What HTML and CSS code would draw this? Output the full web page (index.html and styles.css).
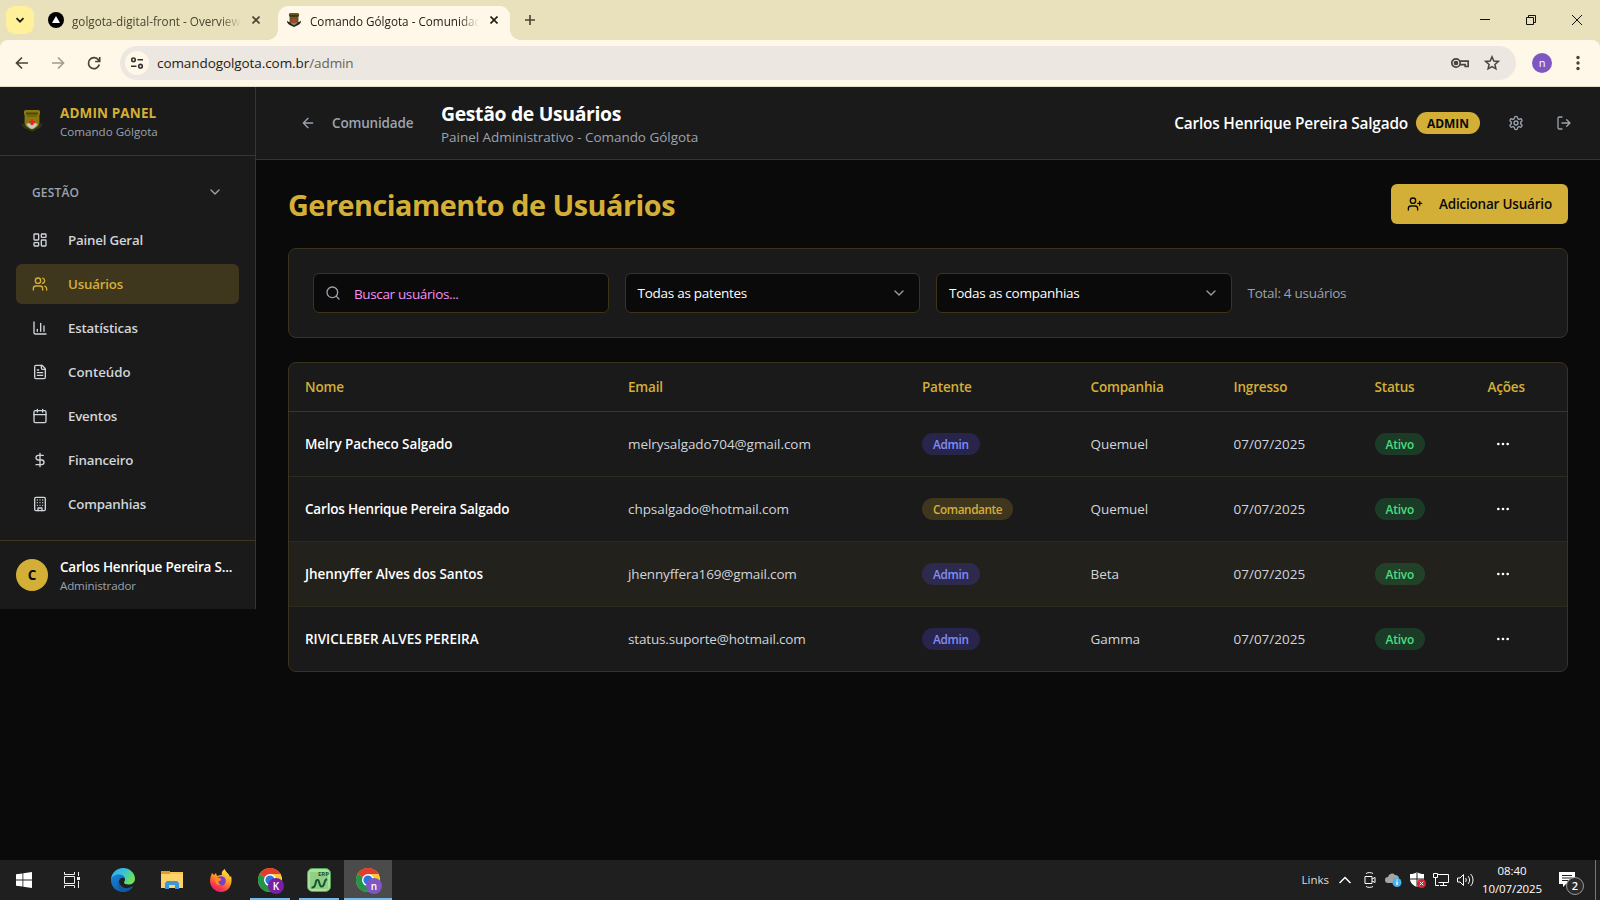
FILE: index.html
```html
<!DOCTYPE html>
<html lang="pt-BR">
<head>
<meta charset="utf-8">
<title>Comando Gólgota - Comunidade</title>
<link rel="stylesheet" href="styles.css">
</head>
<body>
<svg class="defs" width="0" height="0">
  <defs>
    <symbol id="crest" viewBox="0 0 22 22">
      <path d="M.5 12.500c0 5 4 6 6 7l4.500 2.200 4.500-2.200c2-1 6-2 6-7l-3 3H3.500z" fill="#333719"/>
      <path d="M3 1l1.500-1h13L19 1v3l-.6 1v8.500c0 2-3.400 4.500-7.400 6C7 18 3.600 15.500 3.600 13.500V5L3 4z" fill="#8a780e"/>
      <path d="M5 2.500h12v2H5z" fill="#4d450d"/><path d="M6 5.500h10v1H6z" fill="#5a500f"/>
      <path d="M5.500 14l2.500-1 3 2.500 3-2.500 2.500 1c-.8 2.500-3 4-5.500 5-2.500-1-4.700-2.500-5.500-5z" fill="#c9c9c2"/>
      <path d="M10 9h2v2h2v2h-2v2h-2v-2H8v-2h2z" fill="#e8261c"/>
    </symbol>
    <symbol id="crest-dark" viewBox="0 0 22 22">
      <path d="M0 12c0 5 4 6.500 6 7.500l5 2.500 5-2.500c2-1 6-2.500 6-7.500l-3 2H3z" fill="#24231c"/>
      <path d="M3 1l2-1h12l2 1v3l-1 1v8c0 3-3 5-7 6.500C7 18 4 16 4 13V5L3 4z" fill="#6b5626"/>
      <path d="M4 3h14v3H4z" fill="#3d321b"/>
      <path d="M6 14l5 2 5-2c-.8 2.500-3 4-5 5-2-1-4.200-2.500-5-5z" fill="#8d8775"/>
      <path d="M10 9h2v2h2v2h-2v2h-2v-2H8v-2h2z" fill="#d8392b"/>
    </symbol>
    <symbol id="chrome" viewBox="0 0 24 24">
      <circle cx="12" cy="12" r="12" fill="#fbc934"/>
      <path d="M12 12L1.600 6A12 12 0 0 1 22.400 6z" fill="#e33b2e"/>
      <path d="M1.600 6A12 12 0 0 0 12 24l5.200-9L12 12z" fill="#249447"/>
      <path d="M12 6h10.400A12 12 0 0 1 12 24l5.200-9z" fill="#fbc934"/>
      <circle cx="12" cy="12" r="6" fill="#fff"/><circle cx="12" cy="12" r="4.600" fill="#2f73e0"/>
    </symbol>
    <symbol id="chevron" viewBox="0 0 24 24"><path d="m6 9 6 6 6-6"/></symbol>
    <symbol id="dots" viewBox="0 0 24 24"><circle cx="12" cy="12" r="1"/><circle cx="19" cy="12" r="1"/><circle cx="5" cy="12" r="1"/></symbol>
  </defs>
</svg>

<div class="tabstrip">
  <div class="tab-search"><svg width="10" height="10" viewBox="0 0 10 10"><path d="M1.500 3.200 5 6.700l3.500-3.500"/></svg></div>
  <div class="tab">
    <svg class="favicon" width="16" height="16" viewBox="0 0 16 16"><circle cx="8" cy="8" r="8" fill="#000"/><path d="M8 4l4 7H4z" fill="#fff"/></svg>
    <span class="tab-title">golgota-digital-front - Overview</span>
    <svg class="tab-close" width="8" height="8" viewBox="0 0 8 8"><path d="M.5.5l7 7M7.500.5l-7 7"/></svg>
  </div>
  <div class="tab tab-active">
    <svg class="favicon" width="14" height="14"><use href="#crest-dark"/></svg>
    <span class="tab-title">Comando Gólgota - Comunidade</span>
    <svg class="tab-close" width="8" height="8" viewBox="0 0 8 8"><path d="M.5.5l7 7M7.500.5l-7 7"/></svg>
  </div>
  <svg class="tab-new" width="12" height="12" viewBox="0 0 12 12"><path d="M6 1v10M1 6h10"/></svg>
  <div class="window-controls">
    <svg width="10" height="10" viewBox="0 0 10 10"><path d="M0 4.500h10"/></svg>
    <svg width="10" height="10" viewBox="0 0 10 10"><path d="M.5 2.500h7v7h-7zM2.500 2.500v-2h7v7h-2"/></svg>
    <svg width="10" height="10" viewBox="0 0 10 10"><path d="M0 0l10 10M10 0L0 10"/></svg>
  </div>
</div>

<div class="toolbar-wrap">
<div class="toolbar">
  <svg class="nav-icon" width="16" height="16" viewBox="0 0 16 16"><path d="M14 8H3M8 2.500 2.500 8 8 13.500"/></svg>
  <svg class="nav-icon nav-disabled" width="16" height="16" viewBox="0 0 16 16"><path d="M2 8h11M8 2.500 13.500 8 8 13.500"/></svg>
  <svg class="nav-icon" width="16" height="16" viewBox="0 0 16 16"><path d="M13.300 9.500A5.500 5.500 0 1 1 12.500 5L13.500 6.200M13.700 2v4.500H9.200"/></svg>
  <div class="omnibox">
    <div class="site-info"><svg width="14" height="14" viewBox="0 0 14 14"><circle cx="3.500" cy="3.800" r="1.800"/><path d="M7.500 3.800H13M1 10.200h5.500"/><circle cx="10.500" cy="10.200" r="1.800"/></svg></div>
    <span class="url">comandogolgota.com.br<span class="url-path">/admin</span></span>
    <svg class="key" width="18" height="12" viewBox="0 0 18 12"><circle cx="5" cy="6" r="4.200"/><circle cx="5" cy="6" r="1.500" fill="#474540"/><path d="M9 4.200h8.200v5.300h-3V7.600H9"/></svg>
    <svg class="star" width="16" height="16" viewBox="0 0 16 16"><path d="M8 1.800l1.800 4.200 4.500.4-3.400 3 1 4.400L8 11.500l-3.900 2.300 1-4.400-3.400-3L6.200 6z"/></svg>
  </div>
  <div class="profile">n</div>
  <svg class="kebab" width="4" height="16" viewBox="0 0 4 16"><circle cx="2" cy="2.500" r="1.700"/><circle cx="2" cy="8" r="1.700"/><circle cx="2" cy="13.500" r="1.700"/></svg>
</div>
</div>

<div class="app">
  <aside class="sidebar">
    <div class="brand">
      <svg class="brand-logo" width="22" height="22"><use href="#crest"/></svg>
      <div><div class="brand-title">ADMIN PANEL</div><div class="brand-sub">Comando Gólgota</div></div>
    </div>
    <nav class="menu">
      <div class="menu-group"><span>GESTÃO</span><svg class="icon"><use href="#chevron"/></svg></div>
      <a class="item"><svg class="icon" viewBox="0 0 24 24"><rect x="3" y="3" width="7" height="9" rx="1"/><rect x="14" y="3" width="7" height="5" rx="1"/><rect x="14" y="12" width="7" height="9" rx="1"/><rect x="3" y="16" width="7" height="5" rx="1"/></svg><span>Painel Geral</span></a>
      <a class="item item-active"><svg class="icon" viewBox="0 0 24 24"><path d="M16 21v-2a4 4 0 0 0-4-4H6a4 4 0 0 0-4 4v2"/><circle cx="9" cy="7" r="4"/><path d="M22 21v-2a4 4 0 0 0-3-3.870M16 3.130a4 4 0 0 1 0 7.750"/></svg><span>Usuários</span></a>
      <a class="item"><svg class="icon" viewBox="0 0 24 24"><path d="M3 3v16a2 2 0 0 0 2 2h16M18 17V9M13 17V5M8 17v-3"/></svg><span>Estatísticas</span></a>
      <a class="item item-even"><svg class="icon" viewBox="0 0 24 24"><path d="M15 2H6a2 2 0 0 0-2 2v16a2 2 0 0 0 2 2h12a2 2 0 0 0 2-2V7Z"/><path d="M14 2v4a2 2 0 0 0 2 2h4M10 9H8M16 13H8M16 17H8"/></svg><span>Conteúdo</span></a>
      <a class="item"><svg class="icon" viewBox="0 0 24 24"><path d="M8 2v4M16 2v4M3 10h18"/><rect x="3" y="4" width="18" height="18" rx="2"/></svg><span>Eventos</span></a>
      <a class="item"><svg class="icon" viewBox="0 0 24 24"><path d="M12 2v20M17 5H9.500a3.500 3.500 0 0 0 0 7h5a3.500 3.500 0 0 1 0 7H6"/></svg><span>Financeiro</span></a>
      <a class="item"><svg class="icon" viewBox="0 0 24 24"><rect x="4" y="2" width="16" height="20" rx="2"/><path d="M9 22v-4h6v4M8 6h.01M16 6h.01M12 6h.01M12 10h.01M12 14h.01M16 10h.01M16 14h.01M8 10h.01M8 14h.01"/></svg><span>Companhias</span></a>
    </nav>
    <div class="account">
      <div class="avatar">C</div>
      <div><div class="account-name">Carlos Henrique Pereira S...</div><div class="account-role">Administrador</div></div>
    </div>
  </aside>

  <main class="main">
    <header class="header">
      <a class="back"><svg class="icon" viewBox="0 0 24 24"><path d="m12 19-7-7 7-7M19 12H5"/></svg><span>Comunidade</span></a>
      <div class="heading"><div class="heading-title">Gestão de Usuários</div><div class="heading-sub">Painel Administrativo - Comando Gólgota</div></div>
      <span class="user-name">Carlos Henrique Pereira Salgado</span>
      <span class="role-badge">ADMIN</span>
      <svg class="icon gear" viewBox="0 0 24 24"><path d="M12.220 2h-.44a2 2 0 0 0-2 2v.18a2 2 0 0 1-1 1.730l-.43.25a2 2 0 0 1-2 0l-.15-.08a2 2 0 0 0-2.730.73l-.22.38a2 2 0 0 0 .73 2.730l.15.1a2 2 0 0 1 1 1.720v.51a2 2 0 0 1-1 1.740l-.15.09a2 2 0 0 0-.73 2.730l.22.38a2 2 0 0 0 2.730.73l.15-.08a2 2 0 0 1 2 0l.43.25a2 2 0 0 1 1 1.730V20a2 2 0 0 0 2 2h.44a2 2 0 0 0 2-2v-.18a2 2 0 0 1 1-1.730l.43-.25a2 2 0 0 1 2 0l.15.08a2 2 0 0 0 2.730-.73l.22-.39a2 2 0 0 0-.73-2.730l-.15-.08a2 2 0 0 1-1-1.740v-.5a2 2 0 0 1 1-1.740l.15-.09a2 2 0 0 0 .73-2.730l-.22-.38a2 2 0 0 0-2.730-.73l-.15.08a2 2 0 0 1-2 0l-.43-.25a2 2 0 0 1-1-1.730V4a2 2 0 0 0-2-2z"/><circle cx="12" cy="12" r="3"/></svg>
      <svg class="icon logout" viewBox="0 0 24 24"><path d="M9 21H5a2 2 0 0 1-2-2V5a2 2 0 0 1 2-2h4M16 17l5-5-5-5M21 12H9"/></svg>
    </header>

    <div class="content">
      <div class="title-row">
        <h1 class="page-title">Gerenciamento de Usuários</h1>
        <button class="add"><svg class="icon" viewBox="0 0 24 24"><path d="M16 21v-2a4 4 0 0 0-4-4H6a4 4 0 0 0-4 4v2"/><circle cx="9" cy="7" r="4"/><path d="M19 8v6M22 11h-6"/></svg><span>Adicionar Usuário</span></button>
      </div>

      <section class="card filters">
        <div class="field search"><svg class="icon" viewBox="0 0 24 24"><circle cx="11" cy="11" r="8"/><path d="m21 21-4.300-4.300"/></svg><span>Buscar usuários...</span></div>
        <div class="field select"><span>Todas as patentes</span><svg class="icon"><use href="#chevron"/></svg></div>
        <div class="field select"><span>Todas as companhias</span><svg class="icon"><use href="#chevron"/></svg></div>
        <div class="total">Total: 4 usuários</div>
      </section>

      <section class="card table">
        <div class="row row-head"><span>Nome</span><span>Email</span><span>Patente</span><span>Companhia</span><span>Ingresso</span><span>Status</span><span>Ações</span></div>
        <div class="row"><span class="name">Melry Pacheco Salgado</span><span>melrysalgado704@gmail.com</span><span><b class="pill pill-admin">Admin</b></span><span>Quemuel</span><span class="date">07/07/2025</span><span><b class="pill pill-ok">Ativo</b></span><span><svg class="icon more"><use href="#dots"/></svg></span></div>
        <div class="row"><span class="name name-long">Carlos Henrique Pereira Salgado</span><span>chpsalgado@hotmail.com</span><span><b class="pill pill-cmd">Comandante</b></span><span>Quemuel</span><span class="date">07/07/2025</span><span><b class="pill pill-ok">Ativo</b></span><span><svg class="icon more"><use href="#dots"/></svg></span></div>
        <div class="row row-hover"><span class="name">Jhennyffer Alves dos Santos</span><span class="email-tight">jhennyffera169@gmail.com</span><span><b class="pill pill-admin">Admin</b></span><span>Beta</span><span class="date">07/07/2025</span><span><b class="pill pill-ok">Ativo</b></span><span><svg class="icon more"><use href="#dots"/></svg></span></div>
        <div class="row"><span class="name name-caps">RIVICLEBER ALVES PEREIRA</span><span class="email-tight">status.suporte@hotmail.com</span><span><b class="pill pill-admin">Admin</b></span><span>Gamma</span><span class="date">07/07/2025</span><span><b class="pill pill-ok">Ativo</b></span><span><svg class="icon more"><use href="#dots"/></svg></span></div>
      </section>
    </div>
  </main>
</div>

<footer class="taskbar">
  <div class="task task-start"><svg width="16" height="16" viewBox="0 0 16 16"><path d="M0 2.300 6.500 1.400V7.600H0zM7.300 1.200 16 0v7.600H7.300zM0 8.400h6.500v6.200L0 13.700zM7.300 8.400H16V16l-8.700-1.200z" fill="#fff"/></svg></div>
  <div class="task task-view"><svg width="16" height="16" viewBox="0 0 16 16" fill="none" stroke="#f0f0f0"><path d="M.5 0v2.500h10V0M.5 16v-2.500h10V16M.5 4.500h10v7H.5zM14.500 0v4M14.500 9v7"/><path d="M13 5h3v3h-3z" fill="#f0f0f0" stroke="none"/></svg></div>
  <div class="task"><svg width="24" height="24" viewBox="0 0 24 24">
    <defs><linearGradient id="eg" x1="0" y1="0" x2="1" y2=".5"><stop offset="0" stop-color="#2fa8ea"/><stop offset=".5" stop-color="#35c1dd"/><stop offset="1" stop-color="#6fe05a"/></linearGradient><linearGradient id="eb" x1="0" y1="0" x2="1" y2="1"><stop offset="0" stop-color="#1c83d6"/><stop offset="1" stop-color="#0d4f9e"/></linearGradient></defs>
    <path d="M0 12C0 5 5.500 0 12 0s12 5 12 10.500c0 4-3 6-6.500 6-3 0-4.500-1-4.500-2 0-.8 1-1.200 1-3C14 9 11.500 7.500 9 7.500 4 7.500.5 10 0 12z" fill="url(#eg)"/>
    <path d="M0 12c0-3 3.500-5.500 8-5.500 3.500 0 6 2 6 4.500C12.500 9 8.500 9.500 8 13.500c-.4 4 3.500 7 7.500 7 3 0 5-1 6.700-2C20 22 16 24 12 24 5.500 24 0 19 0 12z" fill="url(#eb)"/>
    <path d="M8 13.500c.5 4.500 5 7.500 9 6.500 2.500-.6 4-1.500 5.200-1.500C20 22 16 24 12 24 8.500 23 6 18 8 13.500z" fill="#12599f"/></svg></div>
  <div class="task"><svg width="22" height="18" viewBox="0 0 22 18"><path d="M0 2h22v15H0z" fill="#fcd36a"/><path d="M9 1h13v2H9z" fill="#f6c451"/><path d="M0 0h9v3H0z" fill="#dd9e18"/><path d="M4 18v-6l2-2h10l2 2v6h-4v-4H8v4z" fill="#3b96dc"/></svg></div>
  <div class="task"><svg width="22" height="23" viewBox="0 0 22 23">
    <defs><linearGradient id="ff" x1=".8" y1="0" x2=".3" y2="1"><stop offset="0" stop-color="#fff04a"/><stop offset=".45" stop-color="#ff9a22"/><stop offset=".8" stop-color="#f8364a"/><stop offset="1" stop-color="#e21c78"/></linearGradient></defs>
    <path d="M2 4l2 2 2-2 1 3c2-1 4-1 5-1-1-3 1-5 3-6 0 3 4 4 5 8l1-1c2 6-1 16-10 16C5 23 0 18 0 12c0-3 1-6 2-8z" fill="url(#ff)"/><circle cx="11" cy="12" r="4.800" fill="#7a3fd0"/><path d="M5 10c2-2 5-1 6 0 1 1-1 2-2 2-1 2 0 3 2 4-4 1-6-2-6-6z" fill="#ff8a24"/></svg></div>
  <div class="task task-open"><svg width="24" height="24"><use href="#chrome"/></svg><i class="chip chip-k">K</i></div>
  <div class="task task-open"><svg width="24" height="24" viewBox="0 0 24 24"><rect x=".5" y=".5" width="23" height="23" rx="5" fill="#a9e09b" stroke="#52a455"/><path d="M3 4h18v17H3z" fill="#79bd72" opacity=".5"/><path d="M4.500 19.500C7 20 8 18 8.500 15.500s1-4 2.500-3.500c1.500.6 1 6 3.500 6.500 2 .3 2.500-2 3-4 .4-1.800 1-3 2.500-3.500" fill="none" stroke="#19562f" stroke-width="2"/></svg><em class="erp">ERP</em></div>
  <div class="task task-current"><svg width="24" height="24"><use href="#chrome"/></svg><i class="chip chip-n">n</i></div>
  <div class="tray">
    <span class="links">Links</span>
    <svg class="tray-up" width="12" height="8" viewBox="0 0 12 8"><path d="M.5 7 6 1.500 11.500 7"/></svg>
    <svg class="tray-cam" width="12" height="16" viewBox="0 0 12 16"><path d="M2 1.500C4 .3 7 .3 9 1.500M2 14.500c2 1.200 5 1.200 7 0M1 4.500h7v7H1zM8 7l3-1.500v5L8 9"/></svg>
    <svg class="tray-cloud" width="17" height="14" viewBox="0 0 17 14"><path d="M3 10a3 3 0 0 1 0-6 4 4 0 0 1 7-2 4 4 0 0 1 4 4v4z" fill="#a5a5a5"/><circle cx="12" cy="9.500" r="4.500" fill="#45b3ee"/><path class="line" d="M12 6.500v1M12 8.500v3.500" stroke-width="1.400"/></svg>
    <svg class="tray-shield" width="16" height="16" viewBox="0 0 16 16"><path d="M7 0c2 1.500 4 2 7 2v5c0 4-4 7-7 8-3-1-7-4-7-8V2c3 0 5-.5 7-2z" fill="#fff"/><path d="M7 0v15M0 7h14" stroke="#222"/><circle cx="11.500" cy="11.500" r="4.500" fill="#dc2430"/><path class="line" d="m9.700 9.700 3.600 3.600m0-3.600-3.600 3.600"/></svg>
    <svg class="tray-net" width="16" height="14" viewBox="0 0 16 14"><path d="M5 1.500h10.500v8H5.500M10.500 9.500v3M7 12.500h7M2.500 5v7.500H6M.5.5h4v4h-4z"/></svg>
    <svg class="tray-vol" width="17" height="14" viewBox="0 0 17 14"><path d="M.5 5h2.500l3.500-3.500v11L3 9H.5zM8.500 5c1 1 1 3 0 4M11 3c2 2 2 6 0 8M13.500 1c3.300 3 3.300 9 0 12"/></svg>
    <div class="clock"><div>08:40</div><div>10/07/2025</div></div>
    <div class="notes"><svg width="16" height="16" viewBox="0 0 16 16"><path d="M0 1h16v12H7l-3 3v-3H0z" fill="#fff" stroke="none"/><path d="M3 4.500h10M3 7h10M3 9.500h6" stroke="#222"/></svg><i class="count">2</i></div>
  </div>
</footer>
</body>
</html>
```

FILE: styles.css
```css
* { box-sizing: border-box; }
body { margin: 0; width: 1600px; height: 900px; overflow: hidden; display: flex; flex-direction: column; background: #0a0a0a; color: #fff; font-family: "Open Sans", "Noto Sans", sans-serif; font-size: 13.5px; line-height: 20px; }
svg { display: block; flex: none; }
.defs { position: absolute; }
span, div { white-space: nowrap; }

/* Browser tab strip */
.tabstrip { height: 40px; flex: none; display: flex; align-items: flex-start; background: #e9e1bb; padding: 6px 18px 0 6px; color: #474531; }
.tab-search { width: 28px; height: 28px; border-radius: 9px; background: #fff199; display: flex; align-items: center; justify-content: center; }
.tab-search svg { fill: none; stroke: #1d1c14; stroke-width: 1.8; }
.tab { height: 34px; display: flex; align-items: center; padding-bottom: 6px; width: 236px; padding-left: 14px; font-size: 11.7px; }
.tab-title { width: 169px; margin-left: 8px; padding-top: 1px; overflow: hidden; -webkit-mask-image: linear-gradient(90deg, #000 88%, transparent); mask-image: linear-gradient(90deg, #000 88%, transparent); }
.tab-close { margin-left: 11px; fill: none; stroke: #474531; stroke-width: 1.6; }
.tab-active { position: relative; width: 232px; margin-left: 8px; padding-left: 9px; background: #fff8e9; border-radius: 10px 10px 0 0; color: #1f1c14; }
.tab-active .tab-title { margin-left: 9px; }
.tab-active::before, .tab-active::after { content: ""; position: absolute; bottom: 0; width: 10px; height: 10px; }
.tab-active::before { left: -10px; background: radial-gradient(circle at 0 0, transparent 9.5px, #fff8e9 10px); }
.tab-active::after { right: -10px; background: radial-gradient(circle at 100% 0, transparent 9.5px, #fff8e9 10px); }
.tab-active .tab-close { stroke: #1f1c14; }
.tab-new { margin: 8px 0 0 14px; fill: none; stroke: #474531; stroke-width: 1.6; }
.window-controls { margin: 9px 0 0 auto; display: flex; gap: 36px; }
.window-controls svg { fill: none; stroke: #111; }

/* Browser toolbar */
.toolbar-wrap { flex: none; background: #e9e1bb; }
.toolbar { height: 47px; display: flex; align-items: center; background: #fff8e9; border-bottom: 1px solid #e3ddcb; padding: 0 20px 0 14px; border-radius: 8px 8px 0 0; }
.nav-icon { margin-right: 20px; fill: none; stroke: #474531; stroke-width: 1.7; }
.nav-disabled { opacity: .5; }
.omnibox { width: 1396px; height: 34px; margin-left: -2px; border-radius: 17px; background: #ece7e0; display: flex; align-items: center; padding: 0 16px 0 5px; }
.site-info { width: 24px; height: 24px; border-radius: 50%; background: #fff8e9; display: flex; align-items: center; justify-content: center; }
.site-info svg { fill: none; stroke: #333; stroke-width: 1.6; }
.url { margin-left: 8px; letter-spacing: -.08px; color: #1f1c14; }
.url-path { color: #66635a; }
.key { margin-left: auto; fill: none; stroke: #474540; stroke-width: 1.7; }
.star { margin-left: 15px; fill: none; stroke: #474540; stroke-width: 1.5; }
.profile { width: 20px; height: 20px; margin-left: 16px; border-radius: 50%; background: #7e57c2; font-size: 11px; line-height: 19px; text-align: center; }
.kebab { margin-left: auto; fill: #474531; }

/* Application shell */
.app { flex: 1; display: flex; align-items: flex-start; background: #0a0a0a; }
.icon { width: 16px; height: 16px; flex: none; fill: none; stroke: currentColor; stroke-width: 2; stroke-linecap: round; stroke-linejoin: round; }
.sidebar { width: 256px; flex: none; background: #1a1a1a; border-right: 1px solid #3f361e; }
.brand { height: 69px; padding: 16px; display: flex; border-bottom: 1px solid #3f361e; }
.brand-logo { margin: 7px 17px 0 5px; }
.brand-title { font-weight: 700; color: #d4af37; letter-spacing: .13px; }
.brand-sub { font-size: 11.6px; line-height: 16px; padding-top: 1px; color: #9ca3af; }
.menu { padding: 16px; display: flex; flex-direction: column; gap: 4px; }
.menu-group { height: 40px; padding: 0 16px; margin-bottom: 4px; display: flex; align-items: center; justify-content: space-between; font-size: 12px; font-weight: 600; letter-spacing: .15px; color: #9ca3af; }
.menu-group span { padding-top: 1px; }
.item { height: 40px; padding: 0 16px; display: flex; align-items: center; gap: 20px; border-radius: 6px; font-weight: 600; color: #d1d5db; font-size: 13.3px; letter-spacing: -.2px; }
.item-even { letter-spacing: -.02px; }
.item-active { background: #3f361e; color: #d4af37; }
.account { border-top: 1px solid #3f361e; height: 69px; padding: 16px; display: flex; gap: 12px; }
.avatar { width: 32px; height: 32px; margin-top: 2px; border-radius: 50%; background: #d4af37; color: #0a0a0a; font-weight: 700; text-align: center; line-height: 32px; }
.account-name { font-weight: 600; letter-spacing: -.2px; }
.account-role { font-size: 11.6px; line-height: 16px; padding-top: 1px; letter-spacing: -.15px; color: #9ca3af; }

/* Page header */
.main { flex: 1; min-width: 0; }
.header { height: 73px; background: #1a1a1a; border-bottom: 1px solid #3f361e; padding: 0 28px 0 44px; display: flex; align-items: center; }
.back { width: 125px; display: flex; gap: 16px; align-items: center; color: #9ca3af; font-weight: 600; letter-spacing: -.17px; }
.heading { margin-left: 16px; }
.heading-title { font-size: 19.4px; line-height: 28px; padding-top: 1px; margin-bottom: -1px; font-weight: 700; letter-spacing: -.34px; }
.heading-sub { color: #9ca3af; letter-spacing: -.04px; }
.user-name { margin-left: auto; padding-top: 2px; font-size: 15.4px; font-weight: 600; letter-spacing: -.19px; }
.role-badge { width: 64px; height: 22px; margin-left: 8px; border-radius: 11px; background: #d4af37; color: #0a0a0a; font-size: 12px; font-weight: 700; line-height: 23px; text-align: center; }
.gear { margin-left: 28px; color: #9ca3af; }
.logout { margin-left: 32px; color: #9ca3af; }

/* Content */
.content { padding: 24px 32px; display: flex; flex-direction: column; gap: 24px; }
.title-row { display: flex; align-items: center; justify-content: space-between; height: 40px; }
.page-title { margin: 0; padding-top: 2px; font-size: 28.8px; line-height: 36px; font-weight: 700; letter-spacing: -.48px; color: #d4af37; }
.add { width: 177px; height: 40px; border: 0; border-radius: 6px; background: #d4af37; color: #0a0a0a; font: 600 13.5px "Open Sans", sans-serif; letter-spacing: -.2px; display: flex; align-items: center; gap: 16px; padding: 0 16px; white-space: nowrap; }
.card { background: #1a1a1a; border: 1px solid #3a331e; border-radius: 8px; overflow: hidden; }
.filters { height: 90px; padding: 24px; display: grid; grid-template-columns: repeat(4, 1fr); gap: 16px; align-items: center; }
.field { height: 40px; border: 1px solid #3f341a; border-radius: 6px; background: #0a0a0a; display: flex; align-items: center; padding: 0 12px; letter-spacing: -.26px; }
.search { color: #f590f5; gap: 13px; padding-left: 11px; letter-spacing: -.36px; }
.search span { padding-top: 2px; }
.search .icon { color: #9ca3af; }
.select { justify-content: space-between; }
.select .icon { opacity: .6; }
.total { color: #9ca3af; letter-spacing: -.28px; }
.row { height: 65px; display: grid; grid-template-columns: 323px 294px 168.5px 143px 141px 113px 1fr; align-items: center; border-bottom: 1px solid #2d291d; color: #d1d5db; letter-spacing: -.06px; }
.row > span { padding-left: 16px; }
.row:last-child { height: 64px; border-bottom: 0; }
.row-head { height: 49px; color: #d4af37; font-weight: 600; border-color: #3f361e; letter-spacing: -.18px; }
.row-hover { background: #23211c; }
.name { color: #fff; font-weight: 600; letter-spacing: -.08px; }
.name-long { letter-spacing: -.19px; }
.name-caps { letter-spacing: -.02px; }
.email-tight { letter-spacing: -.15px; }
.date { letter-spacing: 0; }
.pill { display: inline-block; height: 22px; border-radius: 11px; padding: 0 11px; font-size: 11.8px; line-height: 23px; font-weight: 600; letter-spacing: -.3px; }
.pill-admin { background: rgba(79, 70, 229, .25); color: #818cf8; }
.pill-cmd { background: #3f361e; color: #d4af37; letter-spacing: -.42px; }
.pill-ok { background: rgba(34, 197, 94, .2); color: #4ade80; letter-spacing: -.15px; }
.more { margin-left: 7px; color: #fff; }

/* Taskbar */
.taskbar { height: 40px; flex: none; background: #1f1f1f; display: flex; font-size: 11.5px; }
.task { position: relative; width: 48px; height: 40px; margin-right: 1px; display: flex; align-items: center; justify-content: center; }
.task-start { margin-right: 0; }
.task-view { margin-right: 3px; }
.task-open::after, .task-current::after { content: ""; position: absolute; left: 4px; right: 4px; bottom: 0; height: 2px; background: #76b9ed; }
.task-current { background: #4b4b4b; }
.task-current::after { left: 0; right: 0; }
.chip { position: absolute; left: 22px; top: 18px; width: 16px; height: 16px; border-radius: 50%; font: 600 10px/16px "Open Sans", sans-serif; text-align: center; }
.chip-k { background: #7b1fa2; }
.chip-n { background: #7e57c2; }
.erp { position: absolute; left: 23px; top: 11px; font: 700 6px/7px "Open Sans", sans-serif; color: #19562f; }
.tray { margin-left: auto; display: flex; align-items: center; height: 40px; border-right: 1px solid #777; margin-right: 4px; }
.tray svg { fill: none; stroke: #fff; }
.tray .tray-cloud, .tray .tray-shield { stroke: none; }
.line { stroke: #fff; }
.tray-up { margin-left: 10px; stroke-width: 1.5; }
.tray-cam { margin-left: 13px; }
.tray-cloud { margin-left: 9px; }
.tray-shield { margin-left: 8px; }
.tray-net { margin-left: 7px; }
.tray-vol { margin-left: 8px; }
.links { color: #ddd; }
.clock { width: 60px; margin-left: 8px; text-align: center; line-height: 18px; letter-spacing: -.1px; }
.notes { position: relative; margin-left: 17px; width: 36px; }
.notes svg { margin-top: -2px; }
.count { position: absolute; left: 7px; top: 4px; width: 18px; height: 18px; border: 1px solid #999; border-radius: 50%; background: #2b2b2b; font: 600 11px/16px "Open Sans", sans-serif; text-align: center; }
```
